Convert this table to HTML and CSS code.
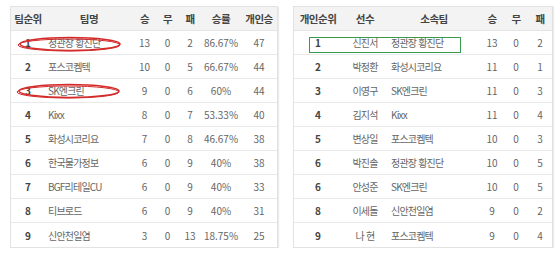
FILE: index.html
```html
<!DOCTYPE html>
<html lang="ko">
<head>
<meta charset="utf-8">
<link rel="stylesheet" href="styles.css">
</head>
<body>
<div class="page">
  <div class="board board-team">
    <table class="rank">
      <colgroup>
        <col style="width:34px"><col style="width:88px"><col style="width:23px"><col style="width:23px"><col style="width:22px"><col style="width:40px"><col style="width:36px">
      </colgroup>
      <thead>
        <tr><th>팀순위</th><th>팀명</th><th>승</th><th>무</th><th>패</th><th>승률</th><th>개인승</th></tr>
      </thead>
      <tbody>
        <tr><td class="no">1</td><td class="name">정관장 황진단</td><td>13</td><td>0</td><td>2</td><td>86.67%</td><td>47</td></tr>
        <tr><td class="no">2</td><td class="name">포스코켐텍</td><td>10</td><td>0</td><td>5</td><td>66.67%</td><td>44</td></tr>
        <tr><td class="no">3</td><td class="name">SK엔크린</td><td>9</td><td>0</td><td>6</td><td>60%</td><td>44</td></tr>
        <tr><td class="no">4</td><td class="name">Kixx</td><td>8</td><td>0</td><td>7</td><td>53.33%</td><td>40</td></tr>
        <tr><td class="no">5</td><td class="name">화성시코리요</td><td>7</td><td>0</td><td>8</td><td>46.67%</td><td>38</td></tr>
        <tr><td class="no">6</td><td class="name">한국물가정보</td><td>6</td><td>0</td><td>9</td><td>40%</td><td>38</td></tr>
        <tr><td class="no">7</td><td class="name">BGF리테일CU</td><td>6</td><td>0</td><td>9</td><td>40%</td><td>33</td></tr>
        <tr><td class="no">8</td><td class="name">티브로드</td><td>6</td><td>0</td><td>9</td><td>40%</td><td>31</td></tr>
        <tr><td class="no">9</td><td class="name">신안천일염</td><td>3</td><td>0</td><td>13</td><td>18.75%</td><td>25</td></tr>
      </tbody>
    </table>
    <svg class="marks" width="268" height="250" viewBox="0 0 268 250">
      <ellipse cx="59" cy="37" rx="50" ry="6.5" fill="none" stroke="#d42a2a" stroke-width="1.5"/>
      <ellipse cx="58" cy="38" rx="51" ry="6" fill="none" stroke="#d42a2a" stroke-width="1"/>
      <ellipse cx="58" cy="84" rx="50" ry="6.5" fill="none" stroke="#d42a2a" stroke-width="1.5"/>
      <ellipse cx="57" cy="85" rx="51" ry="6" fill="none" stroke="#d42a2a" stroke-width="1"/>
    </svg>
  </div>
  <div class="board board-player">
    <table class="rank">
      <colgroup>
        <col style="width:48px"><col style="width:46px"><col style="width:92px"><col style="width:24px"><col style="width:24px"><col style="width:24px">
      </colgroup>
      <thead>
        <tr><th>개인순위</th><th>선수</th><th>소속팀</th><th>승</th><th>무</th><th>패</th></tr>
      </thead>
      <tbody>
        <tr><td class="no">1</td><td class="player">신진서</td><td class="name">정관장 황진단</td><td>13</td><td>0</td><td>2</td></tr>
        <tr><td class="no">2</td><td class="player">박정환</td><td class="name">화성시코리요</td><td>11</td><td>0</td><td>1</td></tr>
        <tr><td class="no">3</td><td class="player">이영구</td><td class="name">SK엔크린</td><td>11</td><td>0</td><td>3</td></tr>
        <tr><td class="no">4</td><td class="player">김지석</td><td class="name">Kixx</td><td>11</td><td>0</td><td>4</td></tr>
        <tr><td class="no">5</td><td class="player">변상일</td><td class="name">포스코켐텍</td><td>10</td><td>0</td><td>3</td></tr>
        <tr><td class="no">6</td><td class="player">박진솔</td><td class="name">정관장 황진단</td><td>10</td><td>0</td><td>5</td></tr>
        <tr><td class="no">6</td><td class="player">안성준</td><td class="name">SK엔크린</td><td>10</td><td>0</td><td>5</td></tr>
        <tr><td class="no">8</td><td class="player">이세돌</td><td class="name">신안천일염</td><td>9</td><td>0</td><td>2</td></tr>
        <tr><td class="no">9</td><td class="player">나 현</td><td class="name">포스코켐텍</td><td>9</td><td>0</td><td>4</td></tr>
      </tbody>
    </table>
    <div class="highlight"></div>
  </div>
</div>
</body>
</html>
```
FILE: styles.css
```css
html, body {
  margin: 0;
  padding: 0;
  background: #ffffff;
}
body {
  font-family: "Noto Sans CJK KR", "Noto Sans", sans-serif;
  font-size: 10px;
  color: #555555;
}
.page {
  display: flex;
  align-items: flex-start;
  gap: 15px;
  padding: 6px 0 0 10px;
}
.board {
  position: relative;
  border: 1px solid #e2e2e2;
  box-shadow: 1px 1px 1px rgba(0, 0, 0, 0.08);
}
.board-team { width: 266px; }
.board-player { width: 258px; }
.rank {
  border-collapse: separate;
  border-spacing: 0;
  table-layout: fixed;
  width: 100%;
}
.rank th {
  height: 23px;
  padding: 0;
  background: #f3f3f3;
  border-bottom: 1px solid #e4e4e4;
  font-size: 10.5px;
  font-weight: bold;
  letter-spacing: -0.5px;
  color: #444444;
  text-align: center;
  white-space: nowrap;
}
.rank td {
  height: 23px;
  padding: 0;
  border-bottom: 1px solid #e9e9e9;
  text-align: center;
  white-space: nowrap;
  color: #666666;
}
.rank tbody tr:last-child td { border-bottom: 0; height: 24px; }
.rank td.no { font-weight: bold; color: #444444; }
.rank td.name,
.rank td.player { letter-spacing: -0.8px; }
.rank td.name { text-align: left; padding-left: 3px; }
.marks {
  position: absolute;
  left: 0;
  top: 0;
  pointer-events: none;
}
.highlight {
  position: absolute;
  left: 15px;
  top: 30px;
  width: 150px;
  height: 14px;
  border: 1.5px solid #3a9a4c;
}
```
